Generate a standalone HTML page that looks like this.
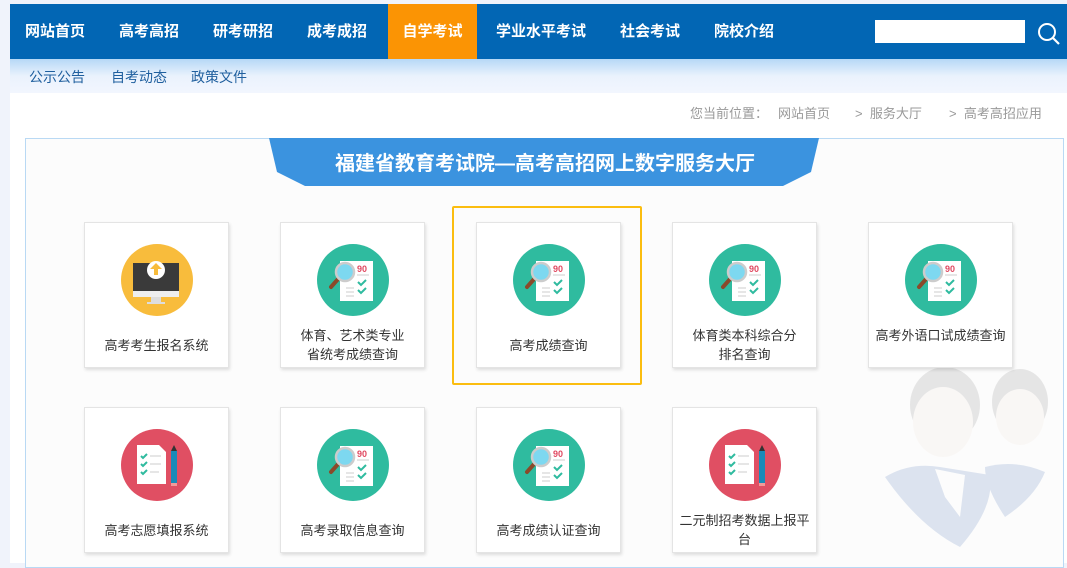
<!DOCTYPE html>
<html><head><meta charset="utf-8"><style>
*{margin:0;padding:0;box-sizing:border-box}
body{width:1067px;height:563px;overflow:hidden;background:#f0f3fb;font-family:"Liberation Sans","Noto Sans CJK SC",sans-serif;position:relative}
.nav{position:absolute;left:10px;top:4px;width:1057px;height:55px;background:#0266b4}
.nav span{position:absolute;top:0;height:55px;line-height:55px;color:#fff;font-weight:bold;font-size:15px;text-align:center}
.nav .on{background:#fb9404}
.sub{position:absolute;left:10px;top:59px;width:1057px;height:34px;background:linear-gradient(#b6d8f6,#eaf2fd 50%,#f2f6fe)}
.sub span{position:absolute;top:8px;font-size:14px;color:#1f5f9e}
.main{position:absolute;left:10px;top:93px;width:1057px;height:470px;background:#fff}
.bc{position:absolute;top:103px;font-size:13px;color:#999}
.box{position:absolute;left:25px;top:138px;width:1039px;height:430px;border:1px solid #b9d9f4;background:#fcfcfc}
.card{position:absolute;width:145px;height:146px;background:#fff;border:1px solid #e4e4e4;box-shadow:1px 2px 3px rgba(0,0,0,.12);text-align:center;font-size:13px;color:#333;line-height:19px}
.card svg{position:absolute;left:36px;top:21px}
.card p{position:absolute;left:0;width:100%}
</style></head><body>
<svg width="0" height="0" style="position:absolute">
<defs>
<g id="g">
<circle cx="36" cy="36" r="36" fill="#2fbb9f"/>
<rect x="23" y="17" width="33" height="40" fill="#fff"/>
<text x="40" y="28" font-size="9" fill="#e04860" font-family="Liberation Sans" font-weight="bold">90</text>
<line x1="40" y1="31" x2="52" y2="31" stroke="#ddd" stroke-width="1.5"/>
<path d="M41 38l3 3 5-5M41 46l3 3 5-5" stroke="#2fbb9f" stroke-width="2" fill="none"/>
<path d="M29 44h8M29 48h8M29 52h8" stroke="#ccc" stroke-width="1"/>
<line x1="22" y1="34" x2="14" y2="43" stroke="#8a4a2a" stroke-width="4" stroke-linecap="round"/>
<circle cx="28" cy="28" r="9" fill="#7dd8f0" stroke="#ccc" stroke-width="2.5"/>
</g>
<g id="r">
<circle cx="36" cy="36" r="36" fill="#e04f63"/>
<path d="M16 16h22l7 7v32H16z" fill="#fff"/>
<path d="M20 27l2 2 4-4M20 35l2 2 4-4M20 43l2 2 4-4" stroke="#2fbb9f" stroke-width="2" fill="none"/>
<path d="M29 27h11M29 35h11M29 43h9" stroke="#ddd" stroke-width="1.5"/>
<rect x="50" y="22" width="6" height="32" fill="#1a8ab8"/>
<path d="M50 22l3-6 3 6z" fill="#333"/>
<rect x="50" y="54" width="6" height="3" fill="#f29a9a"/>
</g>
<g id="y">
<circle cx="36" cy="36" r="36" fill="#f8bc3c"/>
<rect x="12" y="19" width="46" height="28" fill="#3a3a3a"/>
<rect x="12" y="47" width="46" height="6" fill="#eee"/>
<rect x="30" y="53" width="10" height="5" fill="#ddd"/>
<rect x="26" y="58" width="18" height="2" fill="#ddd"/>
<circle cx="35" cy="26" r="9" fill="#fff"/>
<path d="M35 19l-6 6h4v6h4v-6h4z" fill="#f8bc3c"/>
</g>
</defs></svg>
<div class="nav">
<span style="left:0;width:90px">网站首页</span>
<span style="left:95px;width:88px">高考高招</span>
<span style="left:189px;width:88px">研考研招</span>
<span style="left:283px;width:88px">成考成招</span>
<span class="on" style="left:378px;width:89px">自学考试</span>
<span style="left:477px;width:108px">学业水平考试</span>
<span style="left:596px;width:88px">社会考试</span>
<span style="left:690px;width:88px">院校介绍</span>
<div style="position:absolute;left:865px;top:16px;width:150px;height:23px;background:#fff"></div>
<svg style="position:absolute;left:1027px;top:18px" width="24" height="24"><circle cx="10" cy="10" r="8" stroke="#fff" stroke-width="2" fill="none"/><line x1="16" y1="16" x2="22" y2="22" stroke="#fff" stroke-width="2.2"/></svg>
</div>
<div class="sub"><span style="left:19px">公示公告</span><span style="left:101px">自考动态</span><span style="left:181px">政策文件</span></div>
<div class="main"></div>
<span class="bc" style="left:690px">您当前位置：</span>
<span class="bc" style="left:778px">网站首页</span>
<span class="bc" style="left:855px">&gt; &nbsp;服务大厅</span>
<span class="bc" style="left:949px">&gt; &nbsp;高考高招应用</span>
<div class="box"></div>
<svg style="position:absolute;left:262px;top:138px" width="560" height="50"><path d="M7 0H557L549 34L521 48H43L15 34Z" fill="#3b93df"/>
<text x="283" y="32" text-anchor="middle" fill="#fff" font-size="20" font-weight="bold" font-family="Liberation Sans,Noto Sans CJK SC,sans-serif">福建省教育考试院—高考高招网上数字服务大厅</text></svg>
<svg style="position:absolute;left:885px;top:367px" width="175" height="190" opacity=".22">
<path d="M100 100 Q130 92 160 105 Q150 130 120 150 Q100 120 100 100Z" fill="#6f8fc4"/>
<path d="M0 110 Q25 95 55 100 L105 108 Q110 140 75 180 Q35 160 0 110Z" fill="#6f8fc4"/>
<path d="M50 102 L80 108 L75 150 L60 130Z" fill="#fff"/>
<ellipse cx="60" cy="38" rx="35" ry="38" fill="#999"/>
<ellipse cx="58" cy="55" rx="30" ry="35" fill="#f3e6e0"/>
<ellipse cx="135" cy="35" rx="28" ry="33" fill="#999"/>
<ellipse cx="135" cy="50" rx="24" ry="28" fill="#f3e6e0"/>
</svg>
<div style="position:absolute;left:452px;top:206px;width:190px;height:179px;border:2.5px solid #fbbd10;border-radius:2px"></div>
<div class="card" style="left:84px;top:222px"><svg width="72" height="72"><use href="#y"/></svg><p style="top:113px">高考考生报名系统</p></div>
<div class="card" style="left:280px;top:222px"><svg width="72" height="72"><use href="#g"/></svg><p style="top:103px">体育、艺术类专业<br>省统考成绩查询</p></div>
<div class="card" style="left:476px;top:222px"><svg width="72" height="72"><use href="#g"/></svg><p style="top:113px">高考成绩查询</p></div>
<div class="card" style="left:672px;top:222px"><svg width="72" height="72"><use href="#g"/></svg><p style="top:103px">体育类本科综合分<br>排名查询</p></div>
<div class="card" style="left:868px;top:222px"><svg width="72" height="72"><use href="#g"/></svg><p style="top:103px">高考外语口试成绩查询</p></div>
<div class="card" style="left:84px;top:407px"><svg width="72" height="72"><use href="#r"/></svg><p style="top:113px">高考志愿填报系统</p></div>
<div class="card" style="left:280px;top:407px"><svg width="72" height="72"><use href="#g"/></svg><p style="top:113px">高考录取信息查询</p></div>
<div class="card" style="left:476px;top:407px"><svg width="72" height="72"><use href="#g"/></svg><p style="top:113px">高考成绩认证查询</p></div>
<div class="card" style="left:672px;top:407px"><svg width="72" height="72"><use href="#r"/></svg><p style="top:103px">二元制招考数据上报平<br>台</p></div>
</body></html>
